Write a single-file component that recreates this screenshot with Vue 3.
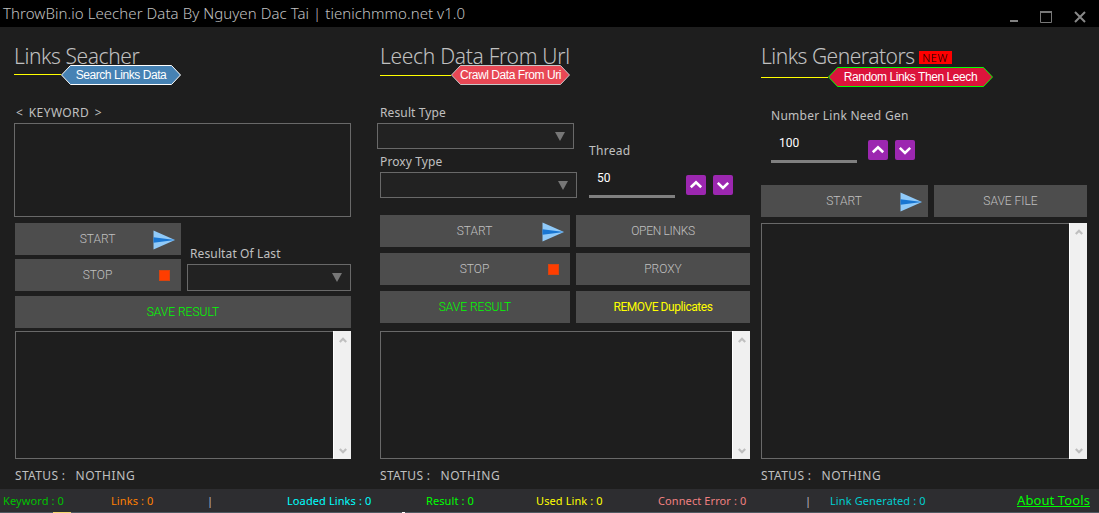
<template>
  <div class="window">
    <svg class="symbols" width="0" height="0">
      <symbol id="send" viewBox="0 0 22 20">
        <path d="M0.5 0.5 L22 10 L0.5 19.5 Z" fill="#90caf9" />
        <path d="M0.5 7.2 L22 10 L0.5 12.8 Z" fill="#1976d2" />
      </symbol>
      <symbol id="up" viewBox="0 0 20 20">
        <path d="M4.8 12.3 L10 7.3 L15.2 12.3" fill="none" stroke="#fff" stroke-width="2.6" />
      </symbol>
      <symbol id="down" viewBox="0 0 20 20">
        <path d="M4.8 7.9 L10 12.9 L15.2 7.9" fill="none" stroke="#fff" stroke-width="2.6" />
      </symbol>
      <symbol id="scroll-up" viewBox="0 0 8 6">
        <path d="M0.8 5 L4 1.8 L7.2 5" fill="none" stroke="#bfbfbf" stroke-width="2.2" />
      </symbol>
      <symbol id="scroll-down" viewBox="0 0 8 6">
        <path d="M0.8 1 L4 4.2 L7.2 1" fill="none" stroke="#bfbfbf" stroke-width="2.2" />
      </symbol>
      <symbol id="caret" viewBox="0 0 10 9">
        <path d="M0 0 H10 L5 9 Z" fill="#777" />
      </symbol>
    </svg>

    <header class="titlebar">
      <span class="app-title">ThrowBin.io Leecher Data By Nguyen Dac Tai | tienichmmo.net v1.0</span>
      <div class="controls">
        <svg width="8" height="12"><path d="M0 10 H8" stroke="#808080" stroke-width="2" /></svg>
        <svg width="12" height="12"><path d="M0.5 0 V11.5 H11.5 V0" fill="none" stroke="#777" /><path d="M0 1 H12" stroke="#777" stroke-width="2" /></svg>
        <svg width="12" height="12"><path d="M1 1 L11 11 M11 1 L1 11" stroke="#888" stroke-width="2" /></svg>
      </div>
    </header>

    <main class="panels">
      <!-- Search -->
      <section class="panel search">
        <h2 class="t-search">Links Seacher</h2>
        <div class="ribbon">
          <i class="rule"></i>
          <div class="tag">
            <svg width="120" height="20"><path d="M0.5 10 L9.5 0.5 H110.5 L119.5 10 L110.5 19.5 H9.5 Z" fill="#4682b4" stroke="#fff" /></svg>
            <span class="tag-text">Search Links Data</span>
          </div>
        </div>
        <label class="keyword">&lt; KEYWORD &gt;</label>
        <div class="box keywords"></div>
        <div class="search-actions">
          <div class="stack">
            <button class="btn start"><span>START</span><svg class="send"><use href="#send" /></svg></button>
            <button class="btn stop"><span>STOP</span><i class="square"></i></button>
          </div>
          <div class="last">
            <label class="l-last">Resultat Of Last</label>
            <div class="select"><svg width="10" height="9"><use href="#caret" /></svg></div>
          </div>
        </div>
        <button class="btn save">SAVE RESULT</button>
        <div class="box output">
          <div class="scroll">
            <svg width="8" height="6"><use href="#scroll-up" /></svg>
            <svg width="8" height="6"><use href="#scroll-down" /></svg>
          </div>
        </div>
        <p class="status"><span>STATUS :</span><span class="state">NOTHING</span></p>
      </section>

      <!-- Leech -->
      <section class="panel leech">
        <h2 class="t-leech">Leech Data From Url</h2>
        <div class="ribbon">
          <i class="rule"></i>
          <div class="tag">
            <svg width="119" height="20"><path d="M0.5 10 L9.5 0.5 H109.5 L118.5 10 L109.5 19.5 H9.5 Z" fill="#e84855" stroke="#c8c8c8" /></svg>
            <span class="tag-text">Crawl Data From Uri</span>
          </div>
        </div>
        <div class="options">
          <div class="types">
            <label class="l-result">Result Type</label>
            <div class="select first"><svg width="10" height="9"><use href="#caret" /></svg></div>
            <label class="l-proxy">Proxy Type</label>
            <div class="select"><svg width="10" height="9"><use href="#caret" /></svg></div>
          </div>
          <div class="thread">
            <label class="l-thread">Thread</label>
            <div class="number">
              <div class="field">{{ threads }}</div>
              <button class="spin" @click="threads++"><svg width="20" height="20"><use href="#up" /></svg></button>
              <button class="spin" @click="threads--"><svg width="20" height="20"><use href="#down" /></svg></button>
            </div>
          </div>
        </div>
        <div class="leech-actions">
          <button class="btn start"><span>START</span><svg class="send"><use href="#send" /></svg></button>
          <button class="btn open">OPEN LINKS</button>
          <button class="btn stop"><span>STOP</span><i class="square"></i></button>
          <button class="btn proxy">PROXY</button>
          <button class="btn save">SAVE RESULT</button>
          <button class="btn remove">REMOVE Duplicates</button>
        </div>
        <div class="box output">
          <div class="scroll">
            <svg width="8" height="6"><use href="#scroll-up" /></svg>
            <svg width="8" height="6"><use href="#scroll-down" /></svg>
          </div>
        </div>
        <p class="status"><span>STATUS :</span><span class="state">NOTHING</span></p>
      </section>

      <!-- Generate -->
      <section class="panel generate">
        <h2><span class="t-generate">Links Generators</span><span class="new">NEW</span></h2>
        <div class="ribbon">
          <i class="rule"></i>
          <div class="tag">
            <svg width="165" height="20"><path d="M0.5 10 L9.5 0.5 H155.5 L164.5 10 L155.5 19.5 H9.5 Z" fill="#dc143c" stroke="#0f0" /></svg>
            <span class="tag-text">Random Links Then Leech</span>
          </div>
        </div>
        <label class="l-gen">Number Link Need Gen</label>
        <div class="number">
          <div class="field">{{ amount }}</div>
          <button class="spin" @click="amount++"><svg width="20" height="20"><use href="#up" /></svg></button>
          <button class="spin" @click="amount--"><svg width="20" height="20"><use href="#down" /></svg></button>
        </div>
        <div class="generate-actions">
          <button class="btn start"><span>START</span><svg class="send"><use href="#send" /></svg></button>
          <button class="btn file">SAVE FILE</button>
        </div>
        <div class="box output">
          <div class="scroll">
            <svg width="8" height="6"><use href="#scroll-up" /></svg>
            <svg width="8" height="6"><use href="#scroll-down" /></svg>
          </div>
        </div>
        <p class="status"><span>STATUS :</span><span class="state">NOTHING</span></p>
      </section>
    </main>

    <footer class="statusbar">
      <span v-for="c in counters" :key="c.name" :class="c.name">{{ c.text }}</span>
      <a class="about">About Tools</a>
    </footer>
    <div class="edge"><i class="gold"></i><i class="white"></i></div>
  </div>
</template>

<script setup>
import { ref } from 'vue';

const threads = ref(50);
const amount = ref(100);

const counters = [
  { name: 'keyword-count', text: 'Keyword : 0' },
  { name: 'links-count', text: 'Links : 0' },
  { name: 'bar-a', text: '|' },
  { name: 'loaded-count', text: 'Loaded Links : 0' },
  { name: 'result-count', text: 'Result : 0' },
  { name: 'used-count', text: 'Used Link : 0' },
  { name: 'error-count', text: 'Connect Error : 0' },
  { name: 'bar-b', text: '|' },
  { name: 'generated-count', text: 'Link Generated : 0' },
];
</script>

<style>
body {
  margin: 0;
  background: #1e1e1e;
  overflow: hidden;
}
</style>

<style scoped>
.window {
  width: 1099px;
  height: 513px;
  display: flex;
  flex-direction: column;
  background: #1e1e1e;
  color: #c0c0c0;
  font-family: "Noto Sans", "Open Sans", sans-serif;
  font-size: 12px;
  white-space: nowrap;
  overflow: hidden;
}

.window * {
  box-sizing: border-box;
}

.symbols {
  position: absolute;
}

.window svg {
  display: block;
  flex: none;
}

.titlebar {
  height: 27px;
  flex: none;
  display: flex;
  justify-content: space-between;
  background: #000;
  padding: 0 13px 0 3px;
}

.app-title {
  font-size: 15px;
  line-height: 26px;
  font-weight: 300;
  letter-spacing: 0.06px;
}

.controls {
  display: flex;
  gap: 22px;
  padding-top: 11px;
}

.panels {
  height: 462px;
  flex: none;
  display: grid;
  grid-template-columns: 337px 370px 326px;
  column-gap: 29px;
  padding-left: 14px;
}

.panel {
  display: flex;
  flex-direction: column;
}

.generate {
  margin-left: -18px;
  width: 326px;
}

h2 {
  margin: 0;
  height: 38px;
  padding-top: 14px;
  font-size: 21px;
  line-height: 30px;
  font-weight: 300;
  display: flex;
  flex: none;
}

.t-search {
  letter-spacing: -0.4px;
}

.t-leech {
  letter-spacing: -0.3px;
}

.t-generate {
  letter-spacing: -0.5px;
}

.ribbon {
  display: flex;
  height: 20px;
  flex: none;
}

.rule {
  height: 1px;
  width: 47px;
  margin-top: 9px;
  background: #ff0;
}

.leech .rule {
  width: 71px;
  margin-top: 10px;
}

.generate .rule {
  width: 67px;
  margin-top: 10px;
}

.tag {
  display: grid;
}

.tag > * {
  grid-area: 1 / 1;
}

.tag-text {
  text-align: center;
  color: #fff;
  font: 12px/20px "Liberation Sans", Arial, sans-serif;
  letter-spacing: -0.43px;
}

label {
  display: block;
  font-size: 12px;
  line-height: 18px;
  letter-spacing: 0.12px;
}

.keyword {
  margin: 19px 0 0 2px;
  height: 19px;
  letter-spacing: 0.4px;
  word-spacing: 2px;
}

.l-gen {
  letter-spacing: 0.26px;
}

.l-thread {
  letter-spacing: 0.3px;
}

.box {
  border: 1px solid #696969;
  flex: none;
}

.keywords {
  height: 94px;
}

.search-actions {
  display: flex;
  gap: 6px;
  margin: 6px 0 0 1px;
}

.stack {
  width: 166px;
  display: flex;
  flex-direction: column;
  gap: 4px;
}

.last {
  flex: 1;
  padding-top: 22px;
}

.last label {
  margin-left: 3px;
  height: 19px;
}

.select {
  height: 27px;
  border: 1px solid #696969;
  background: #222;
  display: flex;
  align-items: center;
  justify-content: flex-end;
  padding-right: 8px;
}

.btn {
  height: 32px;
  border: 0;
  padding: 0 0 1px;
  background: #4d4d4d;
  color: #c0c0c0;
  font: 300 12px/16px Roboto, sans-serif;
  display: flex;
  align-items: center;
  justify-content: center;
}

.start,
.stop {
  position: relative;
  padding-right: 1px;
}

.open {
  letter-spacing: -0.3px;
}

.send {
  position: absolute;
  right: 6px;
  top: 7px;
  width: 22px;
  height: 20px;
}

.square {
  position: absolute;
  right: 11px;
  top: 11px;
  width: 11px;
  height: 11px;
  background: #ff3d00;
  border: 1px solid #d9440f;
}

.save {
  color: #0f0;
}

.remove {
  color: #ff0;
  font-weight: 400;
  letter-spacing: -0.45px;
}

.search > .save {
  margin: 5px 0 0 1px;
}

.output {
  height: 128px;
  display: flex;
  justify-content: flex-end;
}

.search .output {
  margin: 3px 0 0 1px;
}

.scroll {
  width: 18px;
  margin: -1px;
  background: #f0f0f0;
  border-left: 1px solid #fff;
  display: flex;
  flex-direction: column;
  align-items: center;
  justify-content: space-between;
  padding: 6px 0 5px;
}

.status {
  margin: 7px 0 0;
  display: flex;
  gap: 10px;
  font-size: 12px;
  line-height: 20px;
  letter-spacing: 0.35px;
}

.state {
  letter-spacing: 0.6px;
}

.search .status {
  margin-left: 1px;
}

.options {
  display: flex;
  height: 103px;
  margin-top: 19px;
}

.types {
  width: 197px;
}

.types label {
  height: 19px;
}

.types .first {
  margin-left: -3px;
  width: 197px;
}

.types .l-proxy {
  margin-top: 4px;
}

.types .select {
  height: 26px;
}

.thread {
  margin: 38px 0 0 12px;
}

.thread label {
  height: 24px;
}

.number {
  display: flex;
  gap: 7px;
}

.field {
  width: 86px;
  height: 32px;
  margin-right: 4px;
  padding: 2px 0 0 8px;
  border-bottom: 3px solid #808080;
  color: #fff;
  font: 12px/20px Roboto, sans-serif;
}

.spin {
  width: 20px;
  height: 20px;
  margin-top: 9px;
  padding: 0;
  border: 0;
  border-radius: 2px;
  background: #9c27b0;
}

.leech-actions {
  display: grid;
  grid-template-columns: 190px 174px;
  gap: 6px;
  margin: 8px 0;
}

.generate .ribbon {
  margin-top: 2px;
}

.new {
  width: 33px;
  height: 13px;
  margin: 10px 0 0 4px;
  background: #f00;
  color: #000;
  font-size: 11px;
  line-height: 13px;
  letter-spacing: 0.6px;
  text-align: center;
}

.l-gen {
  margin: 20px 0 0 10px;
  height: 24px;
}

.generate .number {
  margin-left: 10px;
}

.generate-actions {
  display: grid;
  grid-template-columns: 167px 153px;
  gap: 6px;
  margin: 22px 0 6px;
}

.generate .output {
  height: 236px;
}

.statusbar {
  height: 23px;
  flex: none;
  display: grid;
  grid-template-columns: 108px 96px 80px 139px 110px 122px 147px 25px 187px 80px;
  padding-left: 3px;
  background: #2d2d30;
  font-size: 11px;
  line-height: 23px;
  letter-spacing: 0.1px;
}

.keyword-count { color: #00c000; }
.links-count { color: #ff8000; }
.loaded-count { color: #0ff; }
.result-count { color: #0f0; }
.used-count { color: #ff0; }
.error-count { color: #f08080; }
.generated-count { color: #00ced1; }

.about {
  color: #0f0;
  font-size: 13px;
  text-decoration: underline;
}

.edge {
  height: 1px;
  display: flex;
  background: #505a62;
}

.gold {
  width: 18px;
  margin-left: 53px;
  background: #f5d76e;
}

.white {
  width: 3px;
  margin-left: 331px;
  background: #fff;
}
</style>
